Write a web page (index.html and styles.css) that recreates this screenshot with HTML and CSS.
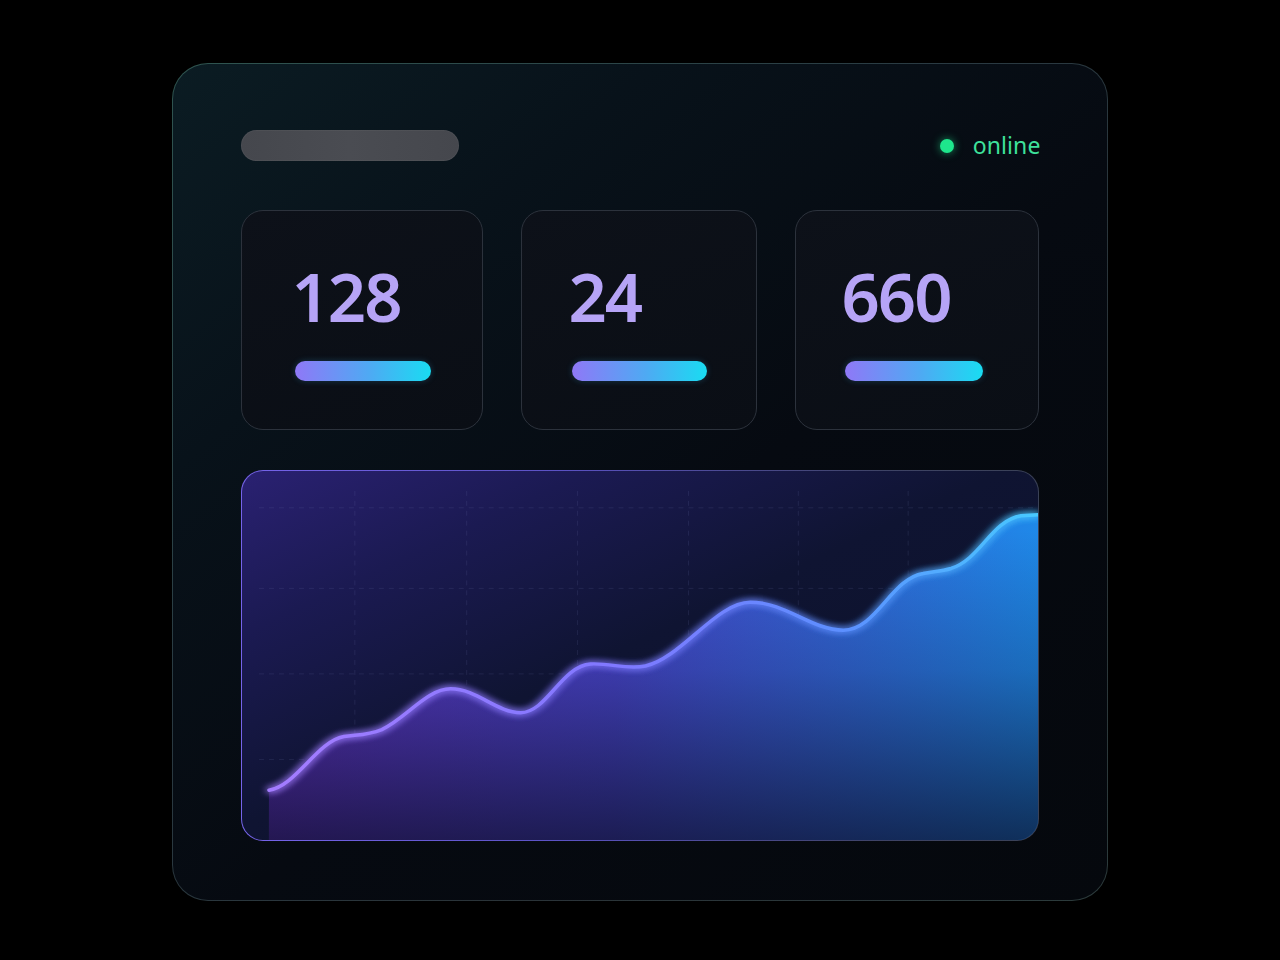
FILE: index.html
```html
<!DOCTYPE html>
<html lang="en">
<head>
<meta charset="utf-8">
<title>Dashboard</title>
<link rel="stylesheet" href="styles.css">
</head>
<body>
<main class="panel">
  <header class="panel-head">
    <div class="title-bar"></div>
    <div class="status"><span class="status-dot"></span><span class="status-text">online</span></div>
  </header>
  <section class="stats">
    <div class="stat stat-a">
      <div class="stat-num">128</div>
      <div class="stat-bar"></div>
    </div>
    <div class="stat stat-b">
      <div class="stat-num">24</div>
      <div class="stat-bar"></div>
    </div>
    <div class="stat stat-c">
      <div class="stat-num">660</div>
      <div class="stat-bar"></div>
    </div>
  </section>
  <section class="chart">
    <svg class="chart-svg" viewBox="0 0 797 371" preserveAspectRatio="none">
      <defs>
        <linearGradient id="fillH" x1="27" y1="0" x2="797" y2="0" gradientUnits="userSpaceOnUse">
          <stop offset="0" stop-color="#6536cc"/>
          <stop offset="0.45" stop-color="#4a48d2"/>
          <stop offset="1" stop-color="#1f88e8"/>
        </linearGradient>
        <linearGradient id="fillV" x1="0" y1="60" x2="0" y2="371" gradientUnits="userSpaceOnUse">
          <stop offset="0" stop-color="#080a1e" stop-opacity="0"/>
          <stop offset="0.45" stop-color="#080a1e" stop-opacity="0.22"/>
          <stop offset="1" stop-color="#080a1e" stop-opacity="0.7"/>
        </linearGradient>
        <linearGradient id="strokeG" x1="27" y1="0" x2="797" y2="0" gradientUnits="userSpaceOnUse">
          <stop offset="0" stop-color="#a47cff"/>
          <stop offset="0.45" stop-color="#8078ff"/>
          <stop offset="0.75" stop-color="#5c90ff"/>
          <stop offset="1" stop-color="#48caff"/>
        </linearGradient>
        <filter id="glow" x="-10%" y="-20%" width="120%" height="140%">
          <feGaussianBlur stdDeviation="4" result="b"/>
          <feMerge><feMergeNode in="b"/><feMergeNode in="b"/><feMergeNode in="SourceGraphic"/></feMerge>
        </filter>
      </defs>
      <g class="grid">
        <line x1="17" y1="37" x2="797" y2="37"/>
        <line x1="17" y1="118" x2="797" y2="118"/>
        <line x1="17" y1="204" x2="797" y2="204"/>
        <line x1="17" y1="290" x2="797" y2="290"/>
        <line x1="113" y1="20" x2="113" y2="371"/>
        <line x1="225" y1="20" x2="225" y2="371"/>
        <line x1="336" y1="20" x2="336" y2="371"/>
        <line x1="447" y1="20" x2="447" y2="371"/>
        <line x1="557" y1="20" x2="557" y2="371"/>
        <line x1="667" y1="20" x2="667" y2="371"/>
      </g>
      <path fill="url(#fillH)" d="M27,321 C55,316 75,272 102,267 C115,265 125,266 140,260 C165,248 185,219 209,219 C235,219 255,243 279,243 C305,243 320,196 349,194 C370,193 385,200 404,196 C440,188 475,132 509,132 C545,132 570,160 602,160 C635,160 650,108 682,103 C692,101 700,101 710,98 C740,88 750,50 780,45 L797,44 L797,371 L27,371 Z"/>
      <path fill="url(#fillV)" d="M27,321 C55,316 75,272 102,267 C115,265 125,266 140,260 C165,248 185,219 209,219 C235,219 255,243 279,243 C305,243 320,196 349,194 C370,193 385,200 404,196 C440,188 475,132 509,132 C545,132 570,160 602,160 C635,160 650,108 682,103 C692,101 700,101 710,98 C740,88 750,50 780,45 L797,44 L797,371 L27,371 Z"/>
      <path class="line" stroke="url(#strokeG)" filter="url(#glow)" d="M27,321 C55,316 75,272 102,267 C115,265 125,266 140,260 C165,248 185,219 209,219 C235,219 255,243 279,243 C305,243 320,196 349,194 C370,193 385,200 404,196 C440,188 475,132 509,132 C545,132 570,160 602,160 C635,160 650,108 682,103 C692,101 700,101 710,98 C740,88 750,50 780,45 L797,44"/>
    </svg>
  </section>
</main>
</body>
</html>
```

FILE: styles.css
```css
* { box-sizing: border-box; }

html, body {
  margin: 0;
  padding: 0;
  background: #000;
  width: 1280px;
  height: 960px;
  overflow: hidden;
  font-family: "Noto Sans", "Open Sans", sans-serif;
}

body {
  display: flex;
  justify-content: center;
  align-items: flex-start;
  padding-top: 63px;
}

.panel {
  width: 936px;
  height: 838px;
  border-radius: 36px;
  border: 1.5px solid transparent;
  background:
    linear-gradient(140deg, #0b1c23 0%, #08121a 25%, #060a11 55%, #05080d 100%) padding-box,
    linear-gradient(140deg, #2f5550 0%, #2a3a42 40%, #2a3338 70%, #2c3b3c 100%) border-box;
  padding: 65.5px 68.5px 0 67.5px;
  display: flex;
  flex-direction: column;
}

.panel-head {
  height: 31px;
  display: flex;
  justify-content: space-between;
  align-items: center;
}

.title-bar {
  width: 218px;
  height: 31px;
  border-radius: 16px;
  background: linear-gradient(90deg, #45474d, #4a4c52 50%, #45474d);
  box-shadow: inset 0 0 0 1px rgba(255,255,255,0.04);
}

.status {
  display: flex;
  align-items: center;
  gap: 19px;
  margin-right: -2px;
  margin-top: 1px;
}

.status-dot {
  width: 14px;
  height: 14px;
  border-radius: 50%;
  background: #1ee68c;
  box-shadow: 0 0 8px rgba(30,230,140,0.6);
}

.status-text {
  font-size: 23px;
  color: #3ee29c;
  line-height: 1;
  letter-spacing: 0.1px;
}

.stats {
  margin-top: 49px;
  display: grid;
  grid-template-columns: 242px 236px 244px;
  justify-content: space-between;
}

.stat {
  height: 220px;
  border-radius: 22px;
  border: 1.5px solid #2c323c;
  background: linear-gradient(160deg, #0d1119 0%, #0a0e15 100%);
  padding: 51px 0 0 53px;
}

.stat-b { padding-left: 50px; }
.stat-c { padding-left: 49px; }

.stat-num {
  font-size: 67px;
  font-weight: 600;
  line-height: 68px;
  letter-spacing: -2px;
  color: #b6a4f6;
  margin-left: -3px;
}

.stat-bar {
  margin-top: 31px;
  width: 136px;
  height: 20px;
  border-radius: 10px;
  background: linear-gradient(90deg, #8f78f7 0%, #4eaaf3 55%, #19dcf2 100%);
  box-shadow: 0 0 6px rgba(60,180,240,0.25);
}

.stat-b .stat-bar { width: 135px; }
.stat-c .stat-bar { width: 138px; }

.chart {
  margin-top: 40px;
  height: 371px;
  border-radius: 22px;
  border: 1.5px solid transparent;
  background:
    linear-gradient(155deg, #2a2172 0%, #1b1a52 22%, #0f1432 48%, #0b1127 100%) padding-box,
    linear-gradient(90deg, #7664ea 0%, #5b52c4 40%, #3e4366 80%, #3a4156 100%) border-box;
  overflow: hidden;
}

.chart-svg {
  display: block;
  width: 100%;
  height: 100%;
}

.grid line {
  stroke: rgba(130,140,200,0.14);
  stroke-width: 1;
  stroke-dasharray: 5 5;
}

.line {
  fill: none;
  stroke-width: 3.5;
  stroke-linecap: round;
}
```
